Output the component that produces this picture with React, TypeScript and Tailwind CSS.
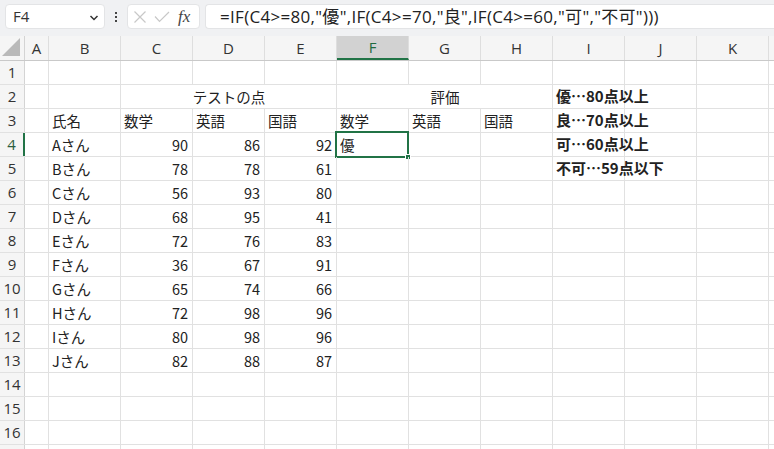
import React from "react";

const cols = ["A", "B", "C", "D", "E", "F", "G", "H", "I", "J", "K", "L"];
const widths = [24, 72, 72, 72, 72, 72, 72, 72, 72, 72, 72, 72];

type Cell = { t: string; align?: "l" | "r"; bold?: boolean };

const data: [string, number, number, number][] = [
  ["Aさん", 90, 86, 92],
  ["Bさん", 78, 78, 61],
  ["Cさん", 56, 93, 80],
  ["Dさん", 68, 95, 41],
  ["Eさん", 72, 76, 83],
  ["Fさん", 36, 67, 91],
  ["Gさん", 65, 74, 66],
  ["Hさん", 72, 98, 96],
  ["Iさん", 80, 98, 96],
  ["Jさん", 82, 88, 87],
];

const legend = ["優…80点以上", "良…70点以上", "可…60点以上", "不可…59点以下"];

function rowCells(r: number): Record<number, Cell> {
  const m: Record<number, Cell> = {};
  if (r === 3) {
    m[1] = { t: "氏名" };
    m[2] = { t: "数学" };
    m[3] = { t: "英語" };
    m[4] = { t: "国語" };
    m[5] = { t: "数学" };
    m[6] = { t: "英語" };
    m[7] = { t: "国語" };
  }
  if (r >= 4 && r <= 13) {
    const d = data[r - 4];
    m[1] = { t: d[0] };
    m[2] = { t: String(d[1]), align: "r" };
    m[3] = { t: String(d[2]), align: "r" };
    m[4] = { t: String(d[3]), align: "r" };
  }
  if (r === 4) m[5] = { t: "優" };
  if (r >= 2 && r <= 5) m[8] = { t: legend[r - 2], bold: true };
  return m;
}

const font = { fontFamily: '"Noto Sans CJK JP", "Noto Sans", sans-serif' };

export default function App() {
  const rows = Array.from({ length: 17 }, (_, i) => i + 1);
  return (
    <div className="w-[774px] h-[449px] overflow-hidden bg-white text-[#222]" style={font}>
      {/* toolbar */}
      <div className="h-[36px] bg-[#f0f1f3] flex items-start pt-[4px] pl-[5px] gap-0">
        <div className="w-[100px] h-[25px] bg-white rounded-[4px] border border-[#e3e4e6] flex items-center justify-between pl-[7px] pr-[5px]">
          <span className="text-[15px] leading-none text-[#333]" style={{ fontFamily: '"Open Sans", "Noto Sans", sans-serif' }}>F4</span>
          <svg width="10" height="8" viewBox="0 0 10 8" className="mt-[2px]">
            <path d="M1.5 2 L5 5.5 L8.5 2" fill="none" stroke="#333" strokeWidth="1.5" />
          </svg>
        </div>
        <div className="w-[22px] h-[25px] flex flex-col items-center justify-center gap-[2px]">
          <div className="w-[2px] h-[2px] bg-[#444]" />
          <div className="w-[2px] h-[2px] bg-[#444]" />
          <div className="w-[2px] h-[2px] bg-[#444]" />
        </div>
        <div className="w-[73px] h-[25px] bg-white rounded-[4px] border border-[#e3e4e6] flex items-center pl-[5px] gap-[7px]">
          <svg width="14" height="14" viewBox="0 0 14 14">
            <path d="M1.5 1.5 L12.5 12.5 M12.5 1.5 L1.5 12.5" stroke="#c8c8c8" strokeWidth="1.2" fill="none" />
          </svg>
          <svg width="16" height="12" viewBox="0 0 16 12">
            <path d="M1 5.5 L5.5 10.5 L15 1" stroke="#c8c8c8" strokeWidth="1.2" fill="none" />
          </svg>
          <span className="italic text-[17px] leading-none text-[#444] ml-[1px]" style={{ fontFamily: '"Liberation Serif", serif' }}>
            fx
          </span>
        </div>
        <div className="ml-[5px] flex-1 h-[25px] bg-white rounded-l-[4px] border border-r-0 border-[#e3e4e6] flex items-center pl-[14px]">
          <span className="text-[17px] leading-none tracking-[0.3px] text-[#222] whitespace-nowrap" style={{ fontFamily: '"Open Sans", "Noto Sans", "Noto Sans CJK JP", sans-serif' }}>
            =IF(C4&gt;=80,"優",IF(C4&gt;=70,"良",IF(C4&gt;=60,"可","不可")))
          </span>
        </div>
      </div>

      {/* column headers */}
      <div className="flex h-[25px] bg-[#f5f5f5] border-b border-[#c9c9c9]">
        <div className="w-[25px] h-full border-r border-[#d4d4d4] relative flex-none">
          <svg width="20" height="20" viewBox="0 0 20 20" className="absolute right-[3px] bottom-[3px]">
            <path d="M19 1 L19 19 L1 19 Z" fill="#b9b9b9" />
          </svg>
        </div>
        {cols.map((c, i) => (
          <div
            key={c}
            className={`flex-none h-full border-r border-[#dedede] flex items-center justify-center text-[15px] ${
              c === "F" ? "bg-[#d2d2d2] text-[#1e6b3f] border-b-2 border-b-[#217346]" : "text-[#333]"
            }`}
            style={{ width: widths[i], fontFamily: '"Open Sans", "Noto Sans", sans-serif' }}
          >
            {c === "L" ? "" : c}
          </div>
        ))}
      </div>

      {/* rows */}
      {rows.map((r) => {
        const cells = rowCells(r);
        return (
          <div key={r} className="flex h-[24px] border-b border-[#e1e1e1]">
            <div
              className={`w-[25px] flex-none h-full bg-[#f5f5f5] flex items-center justify-center text-[15px] border-r ${
                r === 4 ? "border-r-2 border-r-[#217346] text-[#2c5e41] bg-[#e3e3e3]" : "border-r-[#d4d4d4] text-[#333]"
              }`}
              style={{ fontFamily: '"Open Sans", "Noto Sans", sans-serif' }}
            >
              {r === 17 ? "" : r}
            </div>
            {cols.map((c, i) => {
              const cell = cells[i];
              const merged = r === 2 && (i === 2 || i === 3 || i === 4 || i === 5 || i === 6 || i === 7);
              const selected = r === 4 && c === "F";
              return (
                <div
                  key={c}
                  className={`flex-none h-full relative flex items-center ${cell?.bold ? "text-[15px]" : "text-[14.5px]"} ${
                    merged && i !== 4 && i !== 7 ? "" : "border-r border-[#e1e1e1]"
                  } ${cell?.align === "r" ? "justify-end pr-[4px]" : "pl-[3px]"}`}
                  style={{ width: widths[i] }}
                >
                  {cell && (
                    <span className={`whitespace-nowrap ${cell.bold ? "font-bold" : ""}`}>{cell.t}</span>
                  )}
                  {r === 2 && i === 3 && (
                    <span className="absolute left-[-72px] right-[-72px] text-center whitespace-nowrap">テストの点</span>
                  )}
                  {r === 2 && i === 6 && (
                    <span className="absolute left-[-72px] right-[-72px] text-center whitespace-nowrap">評価</span>
                  )}
                  {selected && (
                    <div className="absolute left-[-2px] top-[-2px] right-[-1px] bottom-[-2px] border-2 border-[#217346] pointer-events-none">
                      <div className="absolute right-[-4px] bottom-[-4px] w-[6px] h-[6px] bg-[#217346] border border-white" />
                    </div>
                  )}
                </div>
              );
            })}
          </div>
        );
      })}
    </div>
  );
}
